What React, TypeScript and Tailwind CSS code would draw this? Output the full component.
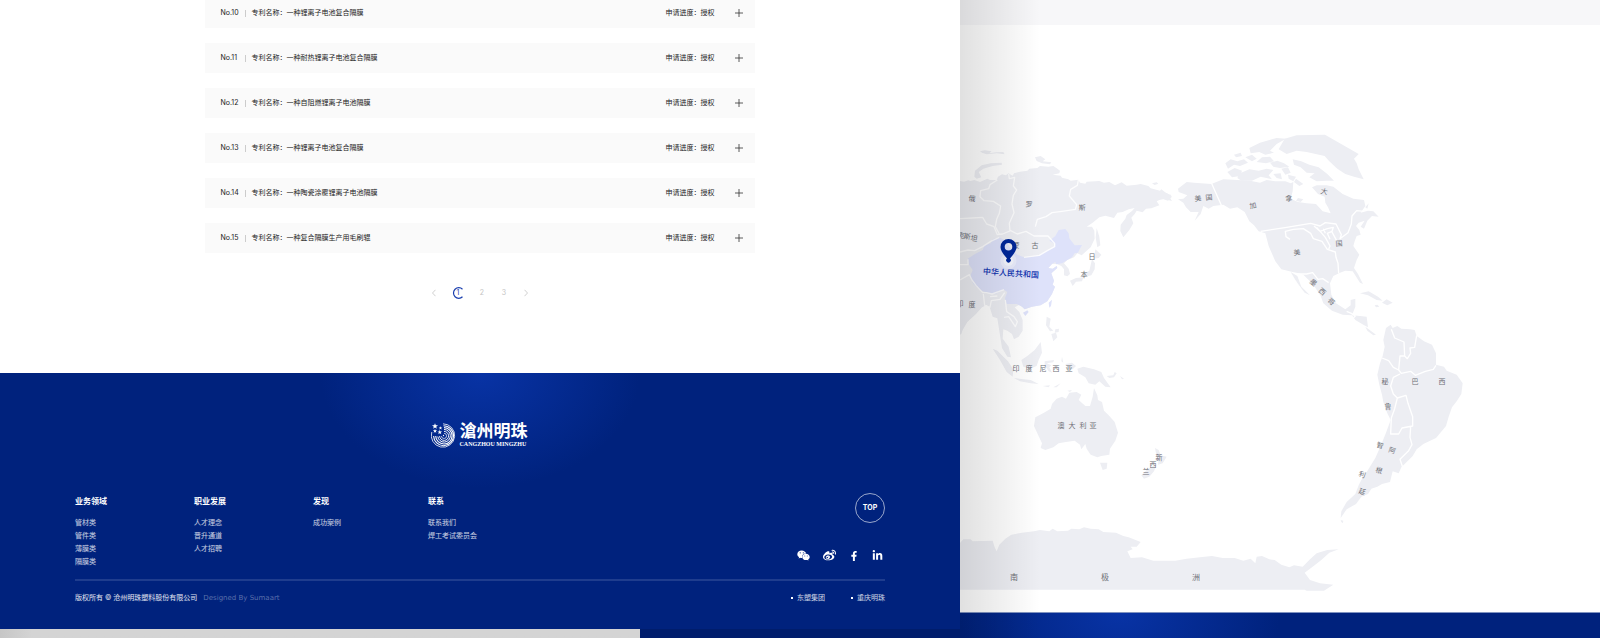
import { useState } from 'react';
import { FaFacebookF, FaLinkedinIn, FaWeibo, FaWeixin } from 'react-icons/fa';

const patents = [
  { no: 'No.10', name: '一种锂离子电池复合隔膜' },
  { no: 'No.11', name: '一种耐热锂离子电池复合隔膜' },
  { no: 'No.12', name: '一种自阻燃锂离子电池隔膜' },
  { no: 'No.13', name: '一种锂离子电池复合隔膜' },
  { no: 'No.14', name: '一种陶瓷涂覆锂离子电池隔膜' },
  { no: 'No.15', name: '一种复合隔膜生产用毛刷辊' },
];

const footerColumns = [
  { title: '业务领域', links: ['管材类', '管件类', '薄膜类', '隔膜类'] },
  { title: '职业发展', links: ['人才理念', '晋升通道', '人才招聘'] },
  { title: '发现', links: ['成功案例'] },
  { title: '联系', links: ['联系我们', '焊工考试委员会'] },
];

const socials = [
  { label: '微信', Icon: FaWeixin, size: 13 },
  { label: '微博', Icon: FaWeibo, size: 13 },
  { label: 'Facebook', Icon: FaFacebookF, size: 10 },
  { label: 'LinkedIn', Icon: FaLinkedinIn, size: 11 },
];

// [text, x, y, rotation]
const mapLabels: [string, number, number, number][] = [
  ['俄', 972, 199, 8],
  ['罗', 1029, 205, 6],
  ['斯', 1082, 208, 2],
  ['克', 961, 236, 10],
  ['斯', 967, 237, 10],
  ['坦', 974, 239, 10],
  ['蒙', 1016, 246, 0],
  ['古', 1035, 246, 0],
  ['日', 1092, 257, 0],
  ['本', 1084, 275, 0],
  ['印', 960, 304, 0],
  ['度', 972, 305, 0],
  ['印', 1016, 369, 0],
  ['度', 1029, 369, 0],
  ['尼', 1043, 369, 0],
  ['西', 1056, 369, 0],
  ['亚', 1069, 369, 0],
  ['澳', 1061, 426, 0],
  ['大', 1072, 426, 0],
  ['利', 1083, 426, 0],
  ['亚', 1093, 426, 0],
  ['新', 1159, 458, 0],
  ['西', 1153, 465, 0],
  ['兰', 1146, 472, 0],
  ['美', 1198, 199, -6],
  ['国', 1209, 198, -6],
  ['加', 1253, 206, -12],
  ['拿', 1289, 199, -8],
  ['大', 1324, 192, 12],
  ['美', 1297, 253, -6],
  ['国', 1339, 244, -4],
  ['墨', 1313, 283, 40],
  ['西', 1322, 292, 40],
  ['哥', 1331, 302, 40],
  ['秘', 1385, 382, 0],
  ['鲁', 1388, 407, 0],
  ['巴', 1415, 382, 0],
  ['西', 1442, 382, 0],
  ['智', 1380, 446, 15],
  ['利', 1362, 475, 20],
  ['阿', 1392, 451, 18],
  ['根', 1379, 471, 15],
  ['廷', 1362, 492, 20],
];

function WorldMap() {
  return (
    <svg
      viewBox="960 25 640 587"
      className="block w-full"
      role="img"
      aria-label="世界地图"
      fontFamily='"Noto Sans CJK SC", sans-serif'
    >
      {/* Asia */}
      <g transform="translate(940 130) scale(.33333)" fill="#edeef3" strokeLinejoin="round">
        <path d="M50 152 72 155 85 151 92 153 103 150 120 156 142 146 150 150 170 150 174 140 186 133 198 136 205 130 218 137 222 130 240 125 262 122 268 116 292 114 300 108 325 110 340 108 350 115 360 122 358 130 338 134 362 137 366 143 385 148 392 152 415 149 420 158 436 161 440 155 478 153 492 158 508 156 525 166 545 157 560 167 590 164 602 162 625 168 632 175 660 182 664 178 682 192 695 195 688 200 696 213 672 207 658 210 650 214 658 226 634 235 618 236 608 247 590 242 584 252 574 263 580 280 568 300 550 322 541 303 542 284 556 266 560 255 576 243 584 234 566 238 548 246 532 248 522 264 496 257 478 262 458 278 440 290 456 290 463 302 464 326 452 352 436 366 425 376 412 370 402 382 382 390 372 400 386 416 390 432 382 439 372 436 372 418 364 408 350 402 336 402 325 414 338 416 350 408 352 414 334 430 342 452 338 464 345 470 336 492 322 514 302 526 276 530 254 538 246 530 238 524 224 532 238 546 248 570 248 602 236 620 222 628 216 612 202 602 190 598 188 626 206 650 213 682 202 680 186 654 180 616 172 565 158 560 150 534 140 525 126 532 108 552 82 576 68 600 64 612 50 620Z" />
        <path d="M103 140 105 122 125 106 152 100 185 98 186 104 158 108 130 116 116 126 124 142 110 146ZM285 82 302 78 316 88 308 94 334 97 330 103 306 100 290 93ZM120 64 134 61 155 64 148 70 168 67 190 66 194 73 170 70 140 73 126 68ZM636 160 650 157 655 161 644 165Z" />
        <path d="M470 294 478 320 481 346 472 352 467 322ZM464 372 466 358 484 374 476 384 462 386ZM456 388 465 400 464 418 454 436 430 442 424 437 434 430 448 422ZM390 452 408 444 430 442 426 454 408 455 398 468Z" />
        <path d="M320 560 332 566 328 590 340 602 330 604 318 586ZM346 598 357 596 356 606 344 608ZM334 612 348 608 352 622 340 634Z" />
        <path
          fill="#dee2fa"
          d="M83 386 105 372 128 360 134 346 152 340 158 328 178 322 200 334 208 350 232 374 252 382 270 380 298 376 322 362 344 350 346 342 328 332 346 318 356 300 376 297 386 310 388 325 404 346 426 345 418 360 414 368 404 370 396 382 382 390 366 400 348 403 346 396 336 402 325 414 338 416 350 408 352 414 334 430 342 452 338 464 345 470 336 492 322 514 302 526 276 530 254 538 246 530 230 522 200 522 195 505 202 486 192 479 166 492 150 491 120 480 100 462 90 440 98 420 86 402Z"
        />
        <path fill="#dee2fa" d="M249 548 262 541 266 546 256 558ZM326 518 336 509 333 528 328 533Z" />
        <g fill="none" stroke="#fff" strokeWidth="4" strokeOpacity=".85">
          <path d="M172 150 150 164 146 176 122 182 120 200 132 212 160 214 182 228 178 250 170 268 166 290 178 312" />
          <path d="M206 132 208 146 224 142 220 168 230 180 220 196 216 222 222 248 208 280 210 302" />
          <path d="M415 150 412 166 392 178 388 198 410 224 406 238 366 244 336 248 318 260 292 268 286 290" />
          <path d="M60 266 96 264 128 262 140 282 162 290 172 314 188 312 212 302 232 312 258 304 282 318 324 318 344 340 344 350 322 362 298 376 252 382" />
          <path d="M60 366 84 360 104 362 128 350 152 334 178 322M60 404 84 404 84 388M60 450 88 434 96 450 108 466 128 488 140 488 156 492 192 479M130 492 134 526 150 532 154 512 180 508 194 488M150 500 172 498M196 510 200 545 222 560 232 575 226 590 206 560 192 562" />
        </g>
      </g>

      {/* Indonesia, Australia, New Zealand */}
      <g transform="translate(940 300) scale(.33333)" fill="#edeef3">
        <path d="M158 146 172 152 204 184 220 208 218 230 200 216 180 180ZM222 234 250 238 272 240 296 252 272 250 240 244ZM308 258 330 256 326 262ZM340 262 362 250 350 262ZM244 180 262 168 284 150 302 126 306 158 296 180 290 198 270 206 250 200ZM314 184 342 180 340 187 320 190 334 196 328 202 336 218 326 214 314 196ZM366 170 370 188 364 184ZM376 192 396 188 408 198 398 208 384 206ZM412 206 430 200 462 208 484 216 492 234 512 262 496 260 478 244 466 254 446 250 436 232 416 220ZM500 228 520 226 524 216 530 220 522 232 508 234ZM540 228 552 236 546 238Z" />
        <path d="M286 352 312 338 332 326 336 312 350 296 366 290 378 296 388 278 410 276 424 284 416 300 436 318 450 318 458 290 462 264 472 286 474 300 486 306 492 332 506 346 524 366 534 398 526 422 510 446 508 464 484 468 472 472 452 464 440 446 436 432 424 448 420 434 404 422 378 426 356 430 340 442 316 450 302 444 306 430 294 404 282 378ZM480 488 502 488 500 506 488 510ZM382 272 396 270 390 276Z" />
        <path d="M645 444 656 450 662 466 680 470 668 490 654 494 656 476 648 460ZM650 494 642 514 628 530 612 536 604 526 620 510 634 500Z" />
      </g>

      {/* North America */}
      <g transform="translate(1160 120) scale(.33333)" fill="#edeef3" strokeLinejoin="round">
        <path d="M54 206 80 186 102 188 154 192 190 178 232 180 270 182 300 188 320 180 346 184 376 184 392 190 400 186 398 214 392 236 414 246 440 250 468 252 488 274 512 280 504 262 496 248 494 230 474 222 456 202 470 196 500 196 520 200 548 222 580 236 612 240 616 258 602 278 624 272 640 274 656 290 636 288 622 302 612 326 602 320 614 302 596 308 588 318 598 330 602 344 590 348 584 364 580 378 598 404 590 420 582 444 594 462 609 492 600 488 578 454 556 452 540 458 520 468 510 490 514 524 528 550 556 568 572 556 572 540 586 536 586 560 576 586 600 588 620 590 624 622 610 614 586 600 576 586 548 584 516 572 490 550 482 528 464 500 450 484 430 464 416 460 398 456 364 448 346 424 326 378 316 340 296 334 282 316 268 304 254 276 232 262 210 266 190 254 160 258 146 266 130 258 122 282 104 302 116 276 92 276 78 262 70 248 54 238 70 236 82 226 56 216ZM0 214 22 220 36 230 24 242 0 234Z" />
        <path d="M392 456 412 468 424 500 450 526 434 518 416 494 404 476ZM600 520 626 514 654 530 668 542 650 540 624 526ZM644 556 652 554 658 560 648 562ZM666 548 680 538 698 548 682 556ZM616 620 632 632 648 644 640 646 622 632ZM616 262 626 250 622 266Z" />
        <path d="M356 88 374 56 410 46 495 44 596 102 582 116 590 130 596 148 611 178 582 170 556 162 532 146 508 124 494 108 440 96 410 92 380 102Z" />
        <path d="M268 84 300 68 350 54 378 56 350 72 330 92 342 98 316 104 298 96 272 100ZM222 104 242 98 246 108 228 112ZM196 130 212 118 232 124 252 118 264 128 240 138 222 134 204 146ZM256 112 276 104 290 116 276 124ZM290 126 306 112 330 110 342 124 318 130ZM202 156 224 144 246 152 240 168 216 172ZM240 160 268 148 296 152 320 146 340 150 326 166 336 178 302 170 276 182 244 182 232 174ZM330 128 352 122 372 130 388 140 360 144 340 140ZM364 146 384 142 392 158 376 164ZM340 162 362 160 366 178 350 174ZM398 118 424 124 448 134 476 142 502 162 522 182 500 182 470 184 448 172 464 160 440 158 422 142 402 134ZM384 164 408 170 400 184 386 176ZM408 176 430 192 418 198 402 186ZM414 234 430 238 422 246 408 242Z" />
        <g fill="none" stroke="#fff" strokeWidth="4">
          <path d="M154 188 186 260M302 334 380 322 452 310 480 318 496 308 528 312 544 344 540 356 564 338 574 312 576 288 590 272 612 274" />
          <path d="M390 358 378 350 376 334 400 328 430 326 452 340 460 356 486 364 502 388 526 396 528 412 534 430 536 460" />
          <path d="M462 318 480 334 502 326 520 322 516 334 502 340 510 358M496 340 490 326M516 336 530 362M470 322 496 352 510 378 506 388" />
          <path d="M412 462 440 462 458 458 474 478 488 476 506 488M560 574 574 580 586 588 576 598" />
        </g>
      </g>

      {/* South America */}
      <g transform="translate(1300 300) scale(.33333)" fill="#edeef3" strokeLinejoin="round">
        <path d="M250 120 258 84 272 74 278 84 292 78 304 86 330 88 344 90 350 108 372 124 396 134 408 160 408 194 432 200 440 212 470 224 488 250 484 282 470 304 456 322 446 350 438 378 408 414 370 432 350 448 338 468 304 502 296 520 278 514 270 546 246 552 232 560 214 566 204 582 184 590 168 612 140 628 122 654 124 634 140 606 166 582 176 556 184 540 204 510 226 474 242 438 258 398 272 360 262 340 250 306 246 284 238 254 232 224 240 190 248 168 254 140ZM122 660 130 662 128 670 124 666Z" />
        <g fill="none" stroke="#fff" strokeWidth="4">
          <path d="M274 88 284 114 312 126 314 168 322 176 332 160 330 144 344 142 350 106" />
          <path d="M246 174 266 182 280 202 296 210 300 168 314 168M296 210 304 220 332 214 346 226 376 214 400 208 408 196" />
          <path d="M300 222 280 232 272 258 280 282 292 294 284 326 274 354 272 402 296 402 306 384 338 378 338 350 324 310 318 286 292 294M332 378 330 412 336 434 326 452 300 478 308 502" />
        </g>
      </g>

      {/* Antarctica */}
      <g transform="translate(940 500) scale(.33333)" fill="#edeef3">
        <path d="M50 140 70 118 92 118 98 124 158 122 164 142 170 154 178 134 196 116 214 104 246 98 282 94 300 90 328 94 338 86 352 94 384 92 394 86 418 88 432 82 452 86 476 88 490 96 528 98 550 108 566 112 602 126 590 140 572 140 578 148 562 154 572 174 606 172 640 182 706 182 740 176 780 172 816 168 848 174 884 174 910 182 932 176 946 190 950 170 966 168 988 178 1004 180 1024 194 1048 202 1062 196 1088 200 1110 178 1130 160 1162 150 1196 148 1168 158 1144 180 1118 200 1094 218 1110 240 1140 250 1180 254 1152 272 1100 272 1094 269 50 269Z" />
      </g>

      <g fontSize="7" fill="#6d6f76" textAnchor="middle">
        {mapLabels.map(([text, x, y, angle]) => (
          <text key={`${x}-${y}`} transform={`translate(${x} ${y}) rotate(${angle})`} y="2">
            {text}
          </text>
        ))}
        {['南', '极', '洲'].map((text, i) => (
          <text key={text} x={1014 + i * 91} y="580" fontSize="8">
            {text}
          </text>
        ))}
      </g>

      <circle cx="1008.500" cy="261" r="8" fill="#fff" fillOpacity=".35" />
      <circle cx="1008.500" cy="261" r="5" fill="#fff" fillOpacity=".5" />
      <path
        fill="#00279a"
        fillRule="evenodd"
        d="M1008.500 239a8 8 0 0 1 8 8c0 4-3.500 8-6.500 11.500a2.300 2.300 0 1 1-3 0c-3-3.500-6.500-7.500-6.500-11.500a8 8 0 0 1 8-8Zm0 4a3.800 3.800 0 1 0 0 7.600 3.800 3.800 0 0 0 0-7.600Z"
      />
      <text
        transform="translate(1011 273) rotate(4)"
        y="3"
        fontSize="8"
        fontWeight="500"
        fill="#0a2fae"
        textAnchor="middle"
      >
        中华人民共和国
      </text>
    </svg>
  );
}

function Logo() {
  const star = 'M0-3 .8-.9 3-.9 1.200.5 1.900 2.600 0 1.300-1.900 2.600-1.200.5-3-.9-.8-.9Z';

  return (
    <a href="#home" className="flex items-center gap-1" aria-label="沧州明珠">
      <svg width="25" height="25" viewBox="0 0 25 25" fill="none" stroke="#fff">
        <path d="M12 .8A11.700 11.700 0 1 1 .8 9" strokeWidth=".8" />
        <path d="M12.500 2.700A10 10 0 1 1 2.600 13" strokeWidth="1.100" />
        <path d="M13 4.600A8.200 8.200 0 1 1 4.700 13" strokeWidth="1.100" />
        <path d="M13 6.500A6.300 6.300 0 1 1 6.800 13.500" />
        <path d="M13 8.400A4.500 4.500 0 1 1 8.600 13" strokeWidth=".9" />
        <path d="M13 10.300A2.600 2.600 0 1 1 10.400 13" strokeWidth=".7" />
        <g fill="#fff" stroke="none">
          <circle cx="12.500" cy="12.500" r=".7" />
          <path d={star} transform="translate(4 3.200)" />
          <path d={star} transform="translate(9.500 5) scale(.6)" />
          <path d={star} transform="translate(4 8) scale(.7)" />
          <path d={star} transform="translate(8.800 9.200) scale(.8)" />
        </g>
      </svg>
      <span className="flex flex-col gap-px text-white">
        <span className="text-[17px] leading-[17px] font-bold">滄州明珠</span>
        <span className="font-['Liberation_Serif',serif] text-[6px] leading-[7px] font-bold">CANGZHOU MINGZHU</span>
      </span>
    </a>
  );
}

function PatentRow({ no, name }: { no: string; name: string }) {
  const [open, setOpen] = useState(false);

  return (
    <li className="flex h-[30px] items-center bg-[#fafafa] pr-3 pl-[15px] text-[7px] text-[#222]">
      <span className="w-[25px]">{no}</span>
      <span className="mr-[5px] h-[7px] w-px bg-[#ccc]" />
      <span>专利名称：{name}</span>
      <span className="mr-5 ml-auto">申请进度：授权</span>
      <button aria-label="展开" aria-expanded={open} onClick={() => setOpen(!open)}>
        <svg width="8" height="8" viewBox="0 0 8 8" stroke="#333" strokeWidth=".8">
          <path d="M0 4h8M4 0v8" />
        </svg>
      </button>
    </li>
  );
}

function Pagination() {
  return (
    <nav className="flex items-center justify-center text-[7px] text-[#c4c4c4]" aria-label="分页">
      <button className="flex w-[22px] justify-center" aria-label="上一页">
        <svg width="4" height="8" viewBox="0 0 4 8" fill="none" stroke="currentColor" strokeWidth=".8">
          <path d="M3.500.8.500 4l3 3.200" />
        </svg>
      </button>
      <button className="grid w-[26px] place-items-center text-[#1a3fae]" aria-current="page">
        <svg className="col-start-1 row-start-1" width="12" height="12" viewBox="0 0 12 12" fill="none" stroke="currentColor" strokeWidth="1.200">
          <path d="M10.500 2.200A5.300 5.300 0 1 0 10.500 9.800" />
        </svg>
        <span className="col-start-1 row-start-1">1</span>
      </button>
      <button className="w-[22px]">2</button>
      <button className="w-[22px]">3</button>
      <button className="flex w-[22px] justify-center" aria-label="下一页">
        <svg width="4" height="8" viewBox="0 0 4 8" fill="none" stroke="currentColor" strokeWidth=".8">
          <path d="m.5.800 3 3.200-3 3.200" />
        </svg>
      </button>
    </nav>
  );
}

function Footer() {
  return (
    <footer className="h-64 bg-[#00227d] bg-[radial-gradient(ellipse_160px_115px_at_50%_0,#0833a5,#00227d)] px-[75px] pt-[50px] text-[7px] text-white">
      <div className="flex justify-center pr-[2px]">
        <Logo />
      </div>

      <div className="mt-[45px] flex h-[83px] justify-between">
        <div className="flex gap-[87px] pt-[2px]">
          {footerColumns.map((column) => (
            <div key={column.title}>
              <h3 className="mb-2 text-[8px] leading-[13px] font-bold">{column.title}</h3>
              <ul className="leading-[13px] text-white/80">
                {column.links.map((link) => (
                  <li key={link}>
                    <a href="#link">{link}</a>
                  </li>
                ))}
              </ul>
            </div>
          ))}
        </div>

        <div className="flex flex-col items-end justify-between pb-[14px]">
          <button className="size-[30px] rounded-full border border-white/60 text-[7px] font-bold">TOP</button>
          <div className="flex items-center gap-[13px] pr-[2px]">
            {socials.map(({ label, Icon, size }) => (
              <a key={label} href="#social" aria-label={label}>
                <Icon size={size} />
              </a>
            ))}
          </div>
        </div>
      </div>

      <div className="mt-[3px] flex items-center border-t-2 border-[#1f3d8e] pt-3 leading-[10px]">
        <p className="text-white/90">版权所有 © 沧州明珠塑料股份有限公司</p>
        <a href="#designer" className="ml-[6px] font-['DejaVu_Sans',sans-serif] text-white/35">
          Designed By Sumaart
        </a>
        <div className="ml-auto flex gap-[26px] text-white/80">
          {['东塑集团', '重庆明珠'].map((name) => (
            <a key={name} href="#group" className="flex items-center gap-1">
              <span className="size-[2px] bg-white" />
              {name}
            </a>
          ))}
        </div>
      </div>
    </footer>
  );
}

export default function App() {
  return (
    <div className="flex min-h-screen overflow-hidden bg-white font-['Inter','Noto_Sans_CJK_SC',sans-serif]">
      <div className="flex w-3/5 flex-col">
        <main className="flex h-[373px] flex-col">
          {/* list is scrolled slightly past its first row */}
          <ul className="mx-auto -mt-[2px] mb-[34px] flex w-[57.200%] flex-col gap-[15px]">
            {patents.map((patent) => (
              <PatentRow key={patent.no} {...patent} />
            ))}
          </ul>
          <Pagination />
        </main>
        <Footer />
        <div className="flex min-h-[9px] flex-1">
          <div className="w-2/3 bg-linear-to-r from-[#c6c6c6] to-[#d4d4d4] to-5%" />
          <div className="flex-1 bg-[#001d6c]" />
        </div>
      </div>

      <section className="relative flex w-2/5 flex-col">
        <div className="h-[25px] bg-[#f7f7f9]" />
        <WorldMap />
        <div className="min-h-[26px] flex-1 border-t border-[#8093c0] bg-[#00227d] bg-[radial-gradient(ellipse_160px_115px_at_25%_0,#0833a5,#00227d)]" />
        <div className="pointer-events-none absolute inset-y-0 left-0 w-20 bg-linear-to-r from-black/12 to-transparent" />
      </section>
    </div>
  );
}
